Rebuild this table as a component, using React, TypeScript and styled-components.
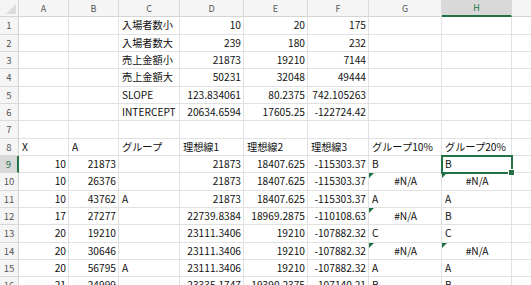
import React from "react";
import styled, { createGlobalStyle, css } from "styled-components";

const GlobalStyle = createGlobalStyle`
  html, body {
    margin: 0;
    padding: 0;
    background: #fff;
  }
  body {
    font-family: "Noto Sans CJK JP", "Noto Sans", sans-serif;
  }
`;

const COLUMNS = ["A", "B", "C", "D", "E", "F", "G", "H", "I"];
// the last column runs past the window edge, so its letter is out of view
const WIDTHS = [50, 50, 61, 64, 64, 61, 73, 70, 64];

const DATA: string[][] = [
  ["", "", "入場者数小", "10", "20", "175", "", "", ""],
  ["", "", "入場者数大", "239", "180", "232", "", "", ""],
  ["", "", "売上金額小", "21873", "19210", "7144", "", "", ""],
  ["", "", "売上金額大", "50231", "32048", "49444", "", "", ""],
  ["", "", "SLOPE", "123.834061", "80.2375", "742.105263", "", "", ""],
  ["", "", "INTERCEPT", "20634.6594", "17605.25", "-122724.42", "", "", ""],
  ["", "", "", "", "", "", "", "", ""],
  ["X", "A", "グループ", "理想線1", "理想線2", "理想線3", "グループ10%", "グループ20%", ""],
  ["10", "21873", "", "21873", "18407.625", "-115303.37", "B", "B", ""],
  ["10", "26376", "", "21873", "18407.625", "-115303.37", "#N/A", "#N/A", ""],
  ["10", "43762", "A", "21873", "18407.625", "-115303.37", "A", "A", ""],
  ["17", "27277", "", "22739.8384", "18969.2875", "-110108.63", "#N/A", "B", ""],
  ["20", "19210", "", "23111.3406", "19210", "-107882.32", "C", "C", ""],
  ["20", "30646", "", "23111.3406", "19210", "-107882.32", "#N/A", "#N/A", ""],
  ["20", "56795", "A", "23111.3406", "19210", "-107882.32", "A", "A", ""],
  ["21", "24999", "", "23335.1747", "19390.2375", "-107140.21", "B", "B", ""],
];

const ERRORS = new Set(["G10", "H10", "G12", "G14", "H14"]);
const SELECTED_COL = "H";
const SELECTED_ROW = 9;

type Align = "left" | "right" | "center";

const alignOf = (v: string): Align => {
  if (v.startsWith("#")) return "center";
  if (/^-?\d+(\.\d+)?$/.test(v)) return "right";
  return "left";
};

const App = () => {
  return (
    <>
      <GlobalStyle />
      <Sheet>
        <Corner />
        {COLUMNS.map((c) => (
          <ColHeader key={c} $active={c === SELECTED_COL}>
            {c}
          </ColHeader>
        ))}
        {DATA.map((row, r) => {
          const rowNo = r + 1;
          return (
            <React.Fragment key={rowNo}>
              <RowHeader $active={rowNo === SELECTED_ROW}>{rowNo}</RowHeader>
              {row.map((v, c) => {
                const ref = `${COLUMNS[c]}${rowNo}`;
                return (
                  <Cell
                    key={ref}
                    $align={alignOf(v)}
                    $error={ERRORS.has(ref)}
                    $selected={COLUMNS[c] === SELECTED_COL && rowNo === SELECTED_ROW}
                  >
                    {v}
                  </Cell>
                );
              })}
            </React.Fragment>
          );
        })}
      </Sheet>
    </>
  );
};

export default App;

const Sheet = styled.div`
  width: 531px;
  height: 285px;
  overflow: hidden;
  display: grid;
  grid-template-columns: 19px ${WIDTHS.map((w) => `${w}px`).join(" ")};
  grid-template-rows: 17.3px;
  grid-auto-rows: 17.33px;
  font-size: 10.2px;
  color: #111;
`;

const Corner = styled.div`
  position: relative;
  box-sizing: border-box;
  background: #f5f5f5;
  border-right: 1px solid #d4d4d4;
  border-bottom: 1px solid #d4d4d4;
  &::after {
    content: "";
    position: absolute;
    right: 2px;
    bottom: 2px;
    width: 0;
    height: 0;
    border-left: 10px solid transparent;
    border-bottom: 10px solid #dcdcdc;
  }
`;

const ColHeader = styled.div<{ $active: boolean }>`
  box-sizing: border-box;
  display: flex;
  align-items: center;
  justify-content: center;
  font-size: 9px;
  color: #555;
  background: #f5f5f5;
  border-right: 1px solid #dadada;
  border-bottom: 1px solid #d4d4d4;
  ${({ $active }) =>
    $active &&
    css`
      background: #d9d9d9;
      color: #217346;
      border-bottom: 2px solid #217346;
    `}
`;

const RowHeader = styled.div<{ $active: boolean }>`
  box-sizing: border-box;
  display: flex;
  align-items: center;
  justify-content: center;
  font-size: 9.5px;
  color: #555;
  background: #f5f5f5;
  border-right: 1px solid #d4d4d4;
  border-bottom: 1px solid #dadada;
  ${({ $active }) =>
    $active &&
    css`
      background: #d9d9d9;
      color: #217346;
      border-right: 2px solid #217346;
    `}
`;

const Cell = styled.div<{ $align: Align; $error: boolean; $selected: boolean }>`
  position: relative;
  box-sizing: border-box;
  display: flex;
  align-items: center;
  justify-content: ${({ $align }) =>
    $align === "right" ? "flex-end" : $align === "center" ? "center" : "flex-start"};
  padding: 0 2px 0 3px;
  white-space: nowrap;
  overflow: visible;
  border-right: 1px solid #e1e1e1;
  border-bottom: 1px solid #e1e1e1;
  line-height: 1;

  ${({ $error }) =>
    $error &&
    css`
      &::before {
        content: "";
        position: absolute;
        left: 0;
        top: 0;
        width: 0;
        height: 0;
        border-top: 5px solid #1e7145;
        border-right: 5px solid transparent;
      }
    `}

  ${({ $selected }) =>
    $selected &&
    css`
      z-index: 1;
      outline: 2px solid #217346;
      outline-offset: -1px;
      &::after {
        content: "";
        position: absolute;
        right: -4px;
        bottom: -4px;
        width: 5px;
        height: 5px;
        background: #217346;
        border: 1px solid #fff;
      }
    `}
`;
